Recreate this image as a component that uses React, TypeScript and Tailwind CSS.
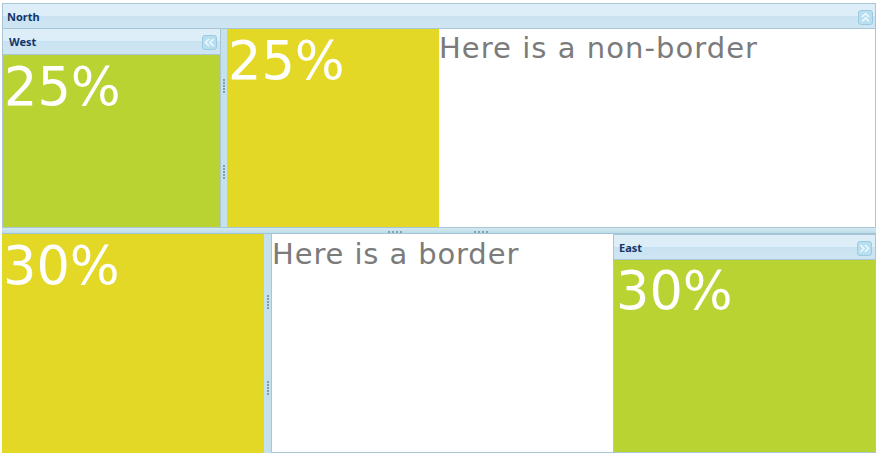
const Chevrons = ({ dir }: { dir: "up" | "left" | "right" }) => {
  const rot = dir === "up" ? 0 : dir === "left" ? -90 : 90;
  return (
    <div className="w-[15px] h-[15px] rounded-[3px] border border-[#9ccbe0] bg-[#b7dff0] flex items-center justify-center">
      <svg width="11" height="11" viewBox="0 0 11 11" fill="none" stroke="#eef9fd" strokeWidth="1.6" style={{ transform: `rotate(${rot}deg)` }}>
        <path d="M2 5 L5.5 1.5 L9 5" />
        <path d="M2 9.5 L5.5 6 L9 9.5" />
      </svg>
    </div>
  );
};

const Header = ({ title, dir, px, h }: { title: string; dir: "up" | "left" | "right"; px: string; h: string }) => (
  <div className={`${h} shrink-0 flex items-center justify-between pt-[2px] ${px} border-b border-[#a9c6d6] bg-[linear-gradient(#deeef9_0%,#deeef9_50%,#c9e2f1_50%,#cfe5f3_100%)]`}>
    <span className="text-[#12356a] font-bold text-[11px] font-['Noto_Sans',sans-serif]">{title}</span>
    <Chevrons dir={dir} />
  </div>
);

const Big = ({ children, className }: { children: string; className: string }) => (
  <div className={`text-white text-[52.5px] leading-[60px] font-['DejaVu_Sans',sans-serif] ${className}`}>{children}</div>
);

const Note = ({ children, className }: { children: string; className: string }) => (
  <div className={`text-[#7b7b7b] text-[29px] leading-[39px] font-['DejaVu_Sans',sans-serif] ${className}`}>{children}</div>
);

const Dots = () => (
  <div className="flex flex-col gap-[1px]">
    {[0, 1, 2, 3, 4].map((i) => (
      <div key={i} className="w-[2px] h-[2px] bg-[#7f9fb0]" />
    ))}
  </div>
);

const HDots = () => (
  <div className="flex gap-[2px]">
    {[0, 1, 2, 3].map((i) => (
      <div key={i} className="w-[2px] h-[2px] bg-[#86a5b4]" />
    ))}
  </div>
);

const VSplitter = ({ w, first, second }: { w: string; first: string; second: string }) => (
  <div className={`${w} shrink-0 bg-[#c5e1ec] flex flex-col items-center`}>
    <div className={first}><Dots /></div>
    <div className={second}><Dots /></div>
  </div>
);

export default function App() {
  return (
    <div className="w-[879px] h-[457px] bg-white pt-[3px] pl-[2px] overflow-hidden">
      <div className="w-[874px] h-[450px] flex flex-col">
        <div className="h-[225px] shrink-0 flex flex-col border border-b-0 border-[#a9c6d6]">
          <Header title="North" dir="up" px="pl-[4px] pr-[2px]" h="h-[25px]" />
          <div className="flex-1 flex border-b border-[#a9c6d6] min-h-0">
            <div className="w-[218px] shrink-0 flex flex-col border-r border-[#a9c6d6]">
              <Header title="West" dir="left" px="pl-[6px] pr-[3px]" h="h-[26px]" />
              <div className="flex-1 bg-[#b8d332]"><Big className="pl-[1px] pt-[2px]">25%</Big></div>
            </div>
            <VSplitter w="w-[6px]" first="mt-[50px]" second="mt-[72px]" />
            <div className="w-[212px] shrink-0 bg-[#e4d827]"><Big className="pl-[1px] pt-[2px]">25%</Big></div>
            <div className="flex-1 bg-white"><Note className="tracking-[1.05px]">Here is a non-border</Note></div>
          </div>
        </div>
        <div className="h-[6px] shrink-0 bg-[linear-gradient(#d3e9f1,#bcdce8)] border-b border-[#a3c4d6] flex items-start pt-[3px] pl-[386px] gap-[72px]">
          <HDots />
          <HDots />
        </div>
        <div className="h-[219px] shrink-0 flex">
          <div className="w-[262px] shrink-0 bg-[#e4d827]"><Big className="pl-[1px] pt-[2px]">30%</Big></div>
          <VSplitter w="w-[7px]" first="mt-[61px]" second="mt-[72px]" />
          <div className="w-[343px] shrink-0 bg-white border-l border-b border-r border-[#a9c6d6]"><Note className="pt-[1px] tracking-[0.88px]">Here is a border</Note></div>
          <div className="flex-1 flex flex-col border-r border-b border-t border-[#a9c6d6]">
            <Header title="East" dir="right" px="pl-[5px] pr-[3px]" h="h-[25px]" />
            <div className="flex-1 bg-[#b8d332]"><Big className="pl-[2px] pt-[1px]">30%</Big></div>
          </div>
        </div>
      </div>
    </div>
  );
}
